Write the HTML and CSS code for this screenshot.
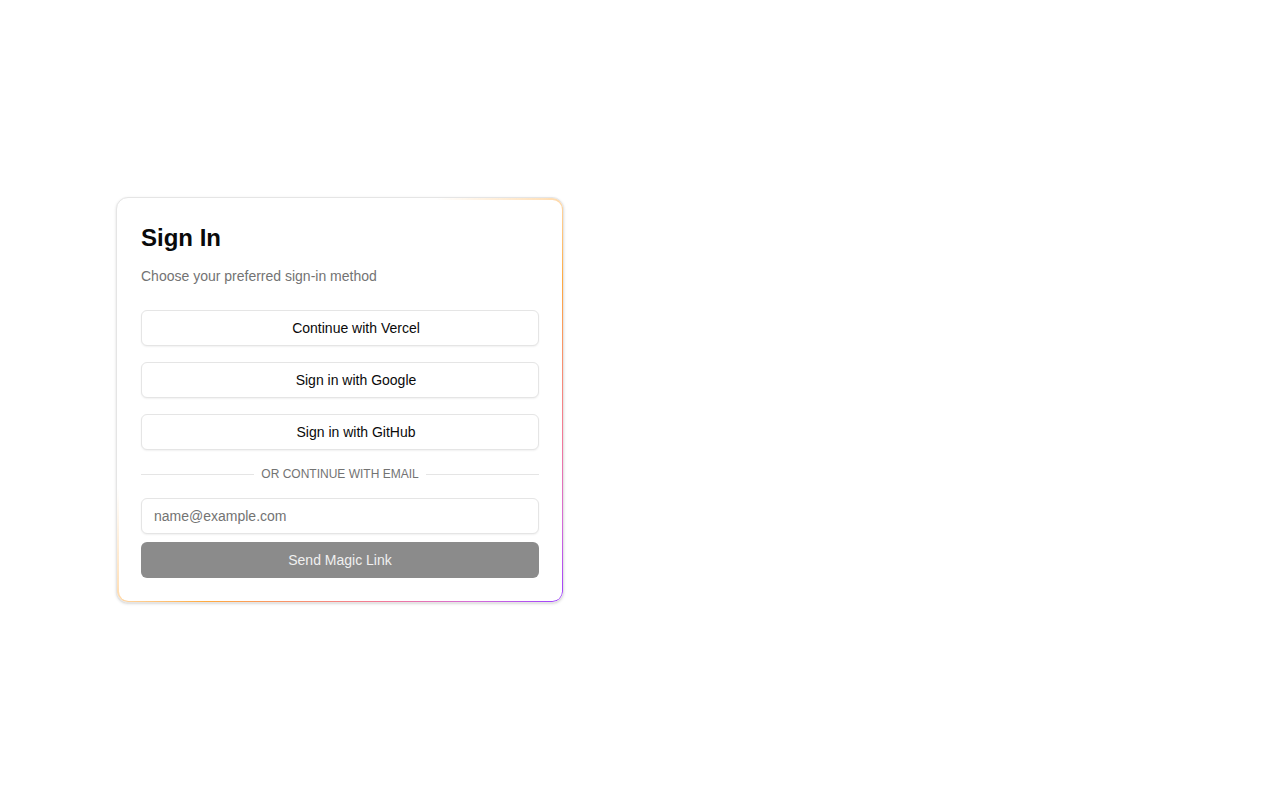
FILE: index.html
```html
<!DOCTYPE html>
<html lang="en">
<head>
<meta charset="utf-8">
<title>Sign In</title>
<link rel="stylesheet" href="styles.css">
</head>
<body>
<main class="page">
  <section class="card">
    <div class="beam"></div>
    <header class="card-header">
      <h1 class="title">Sign In</h1>
      <p class="subtitle">Choose your preferred sign-in method</p>
    </header>
    <div class="providers">
      <button class="btn-outline" type="button"><span class="icon-slot"></span><span>Continue with Vercel</span></button>
      <button class="btn-outline" type="button"><span class="icon-slot"></span><span>Sign in with Google</span></button>
      <button class="btn-outline" type="button"><span class="icon-slot"></span><span>Sign in with GitHub</span></button>
    </div>
    <div class="separator">
      <span class="sep-line"></span>
      <span class="sep-text">Or continue with email</span>
      <span class="sep-line"></span>
    </div>
    <form class="email-form">
      <input class="input" type="email" placeholder="name@example.com">
      <button class="btn-primary" type="button" disabled>Send Magic Link</button>
    </form>
  </section>
</main>
</body>
</html>
```
FILE: styles.css
```css
* { box-sizing: border-box; }

html, body {
  margin: 0;
  padding: 0;
  background: #ffffff;
}

body {
  font-family: "Liberation Sans", Arial, Helvetica, sans-serif;
  color: #0a0a0a;
}

.page {
  min-height: 100vh;
  display: flex;
  align-items: center;
  padding-left: 116px;
}

.card {
  position: relative;
  width: 448px;
  background: #ffffff;
  border: 1px solid #e5e5e5;
  border-radius: 12px;
  box-shadow: 0 1px 3px rgba(0, 0, 0, 0.12), 0 1px 2px -1px rgba(0, 0, 0, 0.1);
  padding: 24px;
  display: flex;
  flex-direction: column;
}

.beam {
  position: absolute;
  inset: 0;
  border-radius: 11px;
  padding: 1.5px;
  pointer-events: none;
  background: linear-gradient(to bottom right,
    rgba(255, 170, 64, 0) 0%,
    rgba(255, 170, 64, 0) 36%,
    rgba(255, 170, 64, 0.35) 48%,
    #ffaa40 60%,
    #f2789a 80%,
    #d46bd8 90%,
    #9c40ff 100%);
  -webkit-mask: linear-gradient(#000 0 0) content-box, linear-gradient(#000 0 0);
  -webkit-mask-composite: xor;
  mask: linear-gradient(#000 0 0) content-box exclude, linear-gradient(#000 0 0);
}

.card-header {
  display: flex;
  flex-direction: column;
  gap: 12px;
}

.title {
  margin: 0;
  font-size: 24px;
  line-height: 32px;
  font-weight: 700;
  color: #0a0a0a;
}

.subtitle {
  margin: 0;
  font-size: 14px;
  line-height: 20px;
  color: #737373;
}

.providers {
  margin-top: 24px;
  display: flex;
  flex-direction: column;
  gap: 16px;
}

.btn-outline {
  height: 36px;
  width: 100%;
  display: inline-flex;
  align-items: center;
  justify-content: center;
  gap: 8px;
  background: #ffffff;
  border: 1px solid #e5e5e5;
  border-radius: 6px;
  box-shadow: 0 1px 2px rgba(0, 0, 0, 0.06);
  font-family: inherit;
  font-size: 14px;
  color: #0a0a0a;
  padding: 0 16px;
}

.icon-slot {
  width: 24px;
  height: 16px;
  flex: none;
}

.separator {
  margin-top: 16px;
  display: flex;
  align-items: center;
  gap: 7px;
  height: 16px;
}

.sep-line {
  flex: 1;
  height: 1px;
  background: #e5e5e5;
}

.sep-text {
  font-size: 12px;
  line-height: 16px;
  text-transform: uppercase;
  color: #737373;
}

.email-form {
  margin-top: 16px;
  display: flex;
  flex-direction: column;
  gap: 8px;
}

.input {
  height: 36px;
  width: 100%;
  border: 1px solid #e5e5e5;
  border-radius: 6px;
  box-shadow: 0 1px 2px rgba(0, 0, 0, 0.06);
  padding: 0 12px;
  font-family: inherit;
  font-size: 14px;
  color: #0a0a0a;
  background: #ffffff;
  outline: none;
}

.input::placeholder {
  color: #737373;
}

.btn-primary {
  height: 36px;
  width: 100%;
  border: none;
  border-radius: 6px;
  background: #8b8b8b;
  color: #f0f0f0;
  font-family: inherit;
  font-size: 14px;
}
```
